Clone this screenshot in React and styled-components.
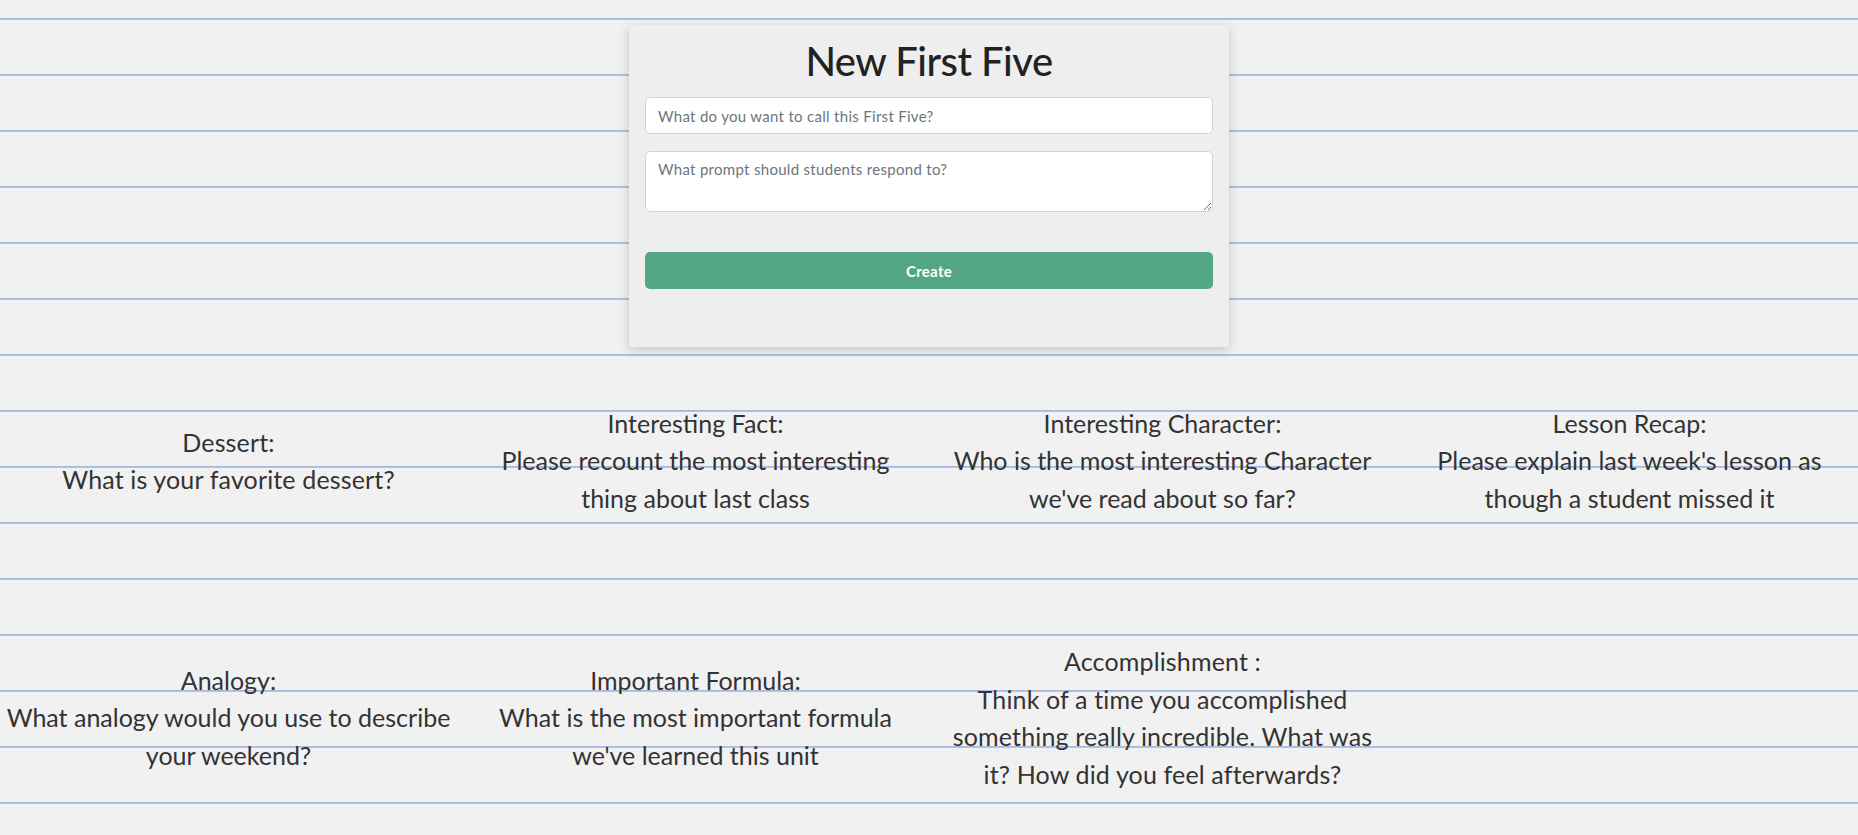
import React from "react";
import styled, { createGlobalStyle } from "styled-components";

const GlobalStyle = createGlobalStyle`
  html, body {
    margin: 0;
    padding: 0;
    overflow: hidden;
  }
  body {
    min-height: 100vh;
    font-family: Lato, "Open Sans", sans-serif;
    color: #333;
    background-color: #f1f1f1;
    background-image: repeating-linear-gradient(
      to bottom,
      transparent 0px,
      transparent 18px,
      #a1b3d8 18px,
      #b9c8e3 20px,
      transparent 20px,
      transparent 56px
    );
  }
`;

const Page = styled.div`
  display: flex;
  flex-direction: column;
  align-items: center;
  padding-top: 25px;
`;

const FormCard = styled.form`
  box-sizing: border-box;
  width: 600px;
  height: 322px;
  padding: 12px 16px 0;
  background: #eeeeee;
  box-shadow: 0 3px 10px rgba(0, 0, 0, 0.18);
  display: flex;
  flex-direction: column;
`;

const Title = styled.h1`
  margin: 0 0 12px;
  font-family: Lato, sans-serif;
  font-size: 40px;
  font-weight: 500;
  line-height: 48px;
  text-align: center;
  color: #222;
  letter-spacing: -0.5px;
`;

const fieldBase = `
  box-sizing: border-box;
  width: 100%;
  border: 1px solid #ced4da;
  border-radius: 5px;
  background: #fff;
  font-family: Lato, sans-serif;
  font-size: 15px;
  letter-spacing: 0.3px;
  color: #495057;
  padding: 0 12px;
  outline: none;
  &::placeholder {
    color: #6c757d;
    opacity: 1;
  }
`;

const TextInput = styled.input`
  ${fieldBase}
  height: 37px;
`;

const TextArea = styled.textarea`
  ${fieldBase}
  height: 61px;
  margin-top: 17px;
  padding-top: 7px;
  line-height: 20px;
  resize: vertical;
`;

const SubmitButton = styled.button`
  margin-top: 40px;
  height: 37px;
  width: 100%;
  border: none;
  border-radius: 5px;
  background: #53a784;
  color: #fff;
  font-family: Lato, sans-serif;
  font-size: 15px;
  font-weight: 700;
  letter-spacing: 0.3px;
  cursor: pointer;
`;

const PromptGrid = styled.div`
  align-self: stretch;
  margin: 14px -5px 0;
  display: grid;
  grid-template-columns: repeat(4, 1fr);
  grid-auto-rows: 200px;
  row-gap: 57px;
`;

const Prompt = styled.div`
  display: flex;
  flex-direction: column;
  justify-content: center;
  align-items: center;
  padding: 0 10px;
  text-align: center;
  font-size: 25px;
  line-height: 37.5px;
  color: #333;
  letter-spacing: ${(p) => (p.$spaced ? "0.15px" : "0")};
`;

const PromptTitle = styled.div``;
const PromptBody = styled.div``;

const prompts = [
  { title: "Dessert:", body: "What is your favorite dessert?", spaced: true },
  { title: "Interesting Fact:", body: "Please recount the most interesting thing about last class" },
  { title: "Interesting Character:", body: "Who is the most interesting Character we've read about so far?" },
  { title: "Lesson Recap:", body: "Please explain last week's lesson as though a student missed it" },
  { title: "Analogy:", body: "What analogy would you use to describe your weekend?" },
  { title: "Important Formula:", body: "What is the most important formula we've learned this unit" },
  { title: "Accomplishment :", body: "Think of a time you accomplished something really incredible. What was it? How did you feel afterwards?", spaced: true },
];

export default function App() {
  return (
    <>
      <GlobalStyle />
      <Page>
        <FormCard onSubmit={(e) => e.preventDefault()}>
          <Title>New First Five</Title>
          <TextInput placeholder="What do you want to call this First Five?" />
          <TextArea placeholder="What prompt should students respond to?" />
          <SubmitButton type="submit">Create</SubmitButton>
        </FormCard>
        <PromptGrid>
          {prompts.map((p) => (
            <Prompt key={p.title} $spaced={p.spaced}>
              <PromptTitle>{p.title}</PromptTitle>
              <PromptBody>{p.body}</PromptBody>
            </Prompt>
          ))}
        </PromptGrid>
      </Page>
    </>
  );
}
